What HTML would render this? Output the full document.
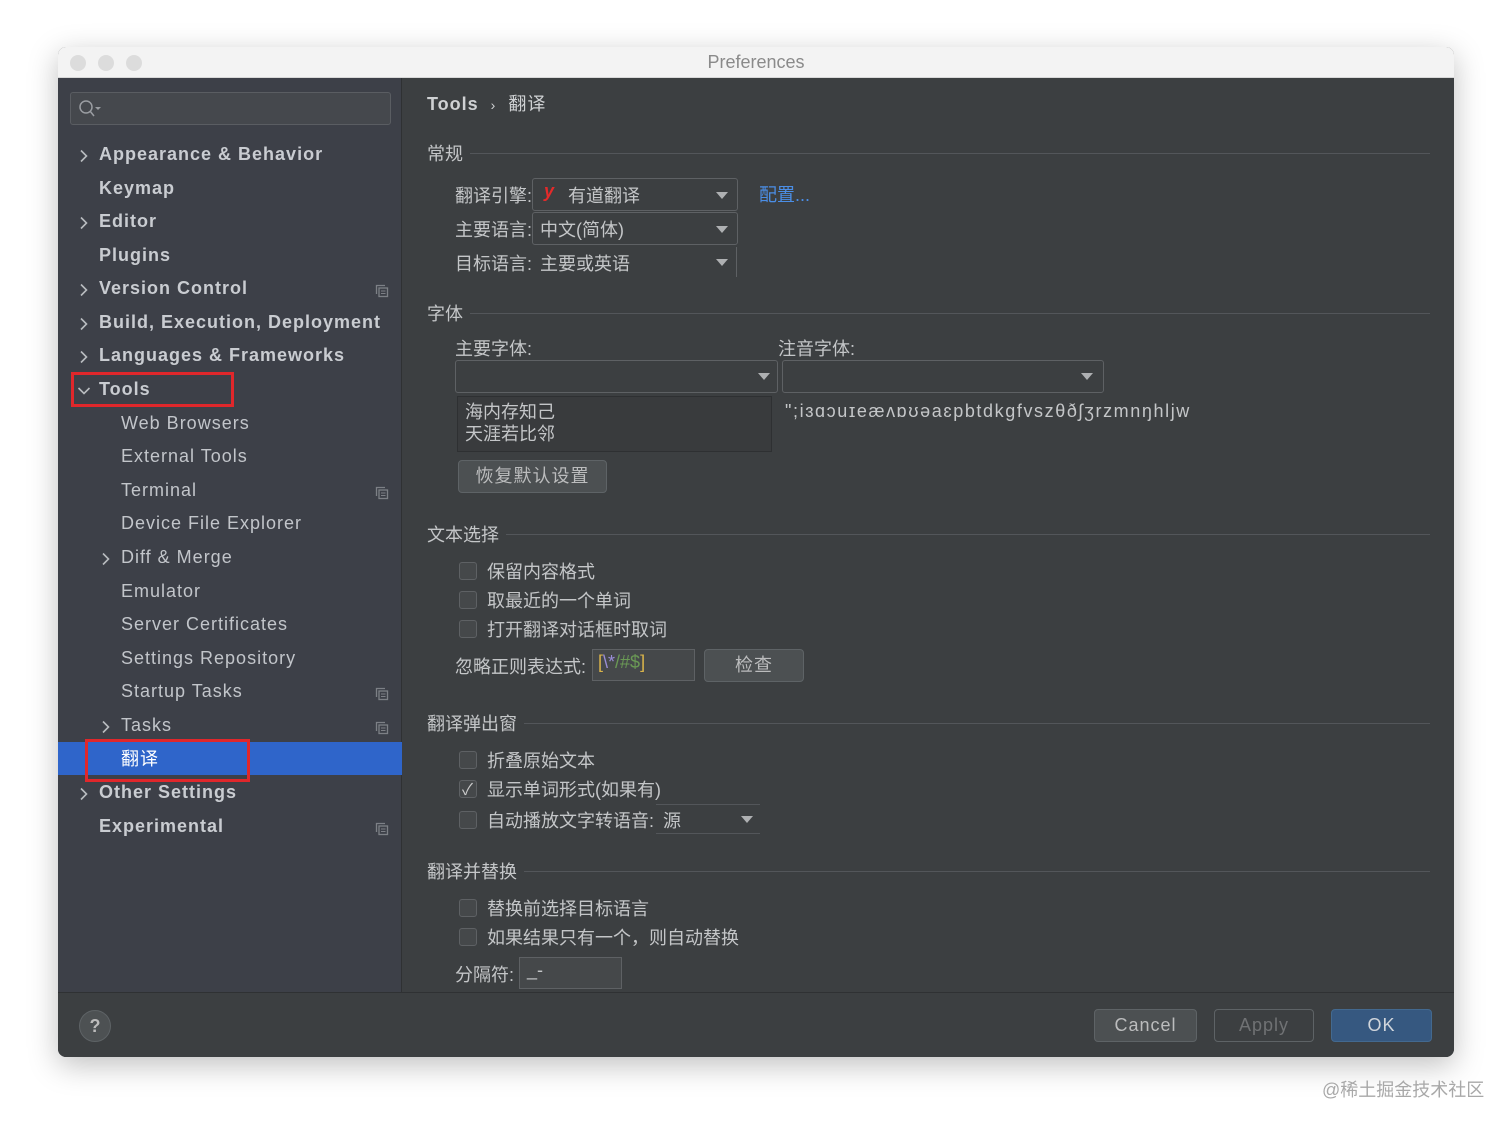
<!DOCTYPE html>
<html><head><meta charset="utf-8"><style>
*{margin:0;padding:0;box-sizing:border-box}
body{width:1512px;height:1127px;background:#fff;position:relative;overflow:hidden;font-family:"Liberation Sans","Noto Sans CJK SC",sans-serif;}
.a{position:absolute;white-space:nowrap}
#win{position:absolute;left:58px;top:47px;width:1396px;height:1010px;border-radius:8px;overflow:hidden;box-shadow:0 8px 30px rgba(0,0,0,.25);background:#3c3f41}
#title{position:absolute;left:0;top:0;width:1396px;height:31px;background:#f3f3f3;border-bottom:1px solid #d8d8d8;text-align:center;line-height:31px;color:#8a8a8a;font-size:18px}
.dot{position:absolute;top:8px;width:16px;height:16px;border-radius:50%;background:#dcdcdc}
#side{position:absolute;left:0;top:31px;width:344px;height:914px;background:#3d4048;border-right:1px solid #2f3133}
#side .in{position:absolute;left:0;top:3px;width:344px;height:900px}
.s{position:absolute;color:#c9ccd1;font-size:18px;font-weight:bold;letter-spacing:1px}
.s2{position:absolute;color:#c2c5ca;font-size:18px;letter-spacing:1px}
.chev{position:absolute;width:10px;height:14px}
.cp{position:absolute;width:14px;height:14px}
.t{position:absolute;color:#c4c6c8;font-size:18px;white-space:nowrap}
.h{position:absolute;color:#c4c6c8;font-size:18px}
.line{position:absolute;height:1px;background:#53565a}
.cb{position:absolute;width:18px;height:18px;border:1px solid #5e6164;border-radius:3px;background:#45484a}
.dd{position:absolute;border:1px solid #5e6164;border-radius:3px;background:#3c3f41}
.tri{position:absolute;width:0;height:0;border-left:6px solid transparent;border-right:6px solid transparent;border-top:7px solid #aeb0b2}
.btn{position:absolute;border:1px solid #5e6366;border-radius:4px;background:#4c5052;color:#bbbcbd;font-size:18px;text-align:center;letter-spacing:1px}
</style></head><body>
<svg width="0" height="0" style="position:absolute"><defs>
<symbol id="ch" viewBox="0 0 10 14"><path d="M2 1.5 L7.5 7 L2 12.5" stroke="#b8bbbf" stroke-width="1.6" fill="none"/></symbol>
<symbol id="cpi" viewBox="0 0 14 14"><path d="M1.5 10V1.5H10" stroke="#7d8086" stroke-width="1.3" fill="none"/><rect x="4" y="4" width="8.5" height="8.5" stroke="#7d8086" stroke-width="1.3" fill="none"/><path d="M6 7h4.5M6 9.5h4.5" stroke="#7d8086" stroke-width="1"/></symbol>
</defs></svg>
<div id="win">
<div id="title">Preferences</div>
<div class="dot" style="left:12px"></div><div class="dot" style="left:40px"></div><div class="dot" style="left:68px"></div>
<div id="side">
<div class="a" style="left:12px;top:14px;width:321px;height:33px;border:1px solid #5a5d62;border-radius:3px;background:#45484d"></div>
<svg class="a" style="left:20px;top:21px" width="26" height="20"><circle cx="8" cy="8" r="6" stroke="#9a9da2" stroke-width="1.5" fill="none"/><line x1="12" y1="12" x2="16" y2="17" stroke="#9a9da2" stroke-width="1.5"/><path d="M17 8h6l-3 3z" fill="#9a9da2"/></svg>
<div class="in">
<svg class="chev" style="left:21px;top:68px"><use href="#ch"/></svg><div class="s" style="left:41px;top:63px">Appearance &amp; Behavior</div>
<div class="s" style="left:41px;top:97px">Keymap</div>
<svg class="chev" style="left:21px;top:135px"><use href="#ch"/></svg><div class="s" style="left:41px;top:130px">Editor</div>
<div class="s" style="left:41px;top:164px">Plugins</div>
<svg class="chev" style="left:21px;top:202px"><use href="#ch"/></svg><div class="s" style="left:41px;top:197px">Version Control</div><svg class="cp" style="left:317px;top:203px"><use href="#cpi"/></svg>
<svg class="chev" style="left:21px;top:236px"><use href="#ch"/></svg><div class="s" style="left:41px;top:231px">Build, Execution, Deployment</div>
<svg class="chev" style="left:21px;top:269px"><use href="#ch"/></svg><div class="s" style="left:41px;top:264px">Languages &amp; Frameworks</div>
<svg class="chev" style="left:21px;top:303px;transform:rotate(90deg)"><use href="#ch"/></svg><div class="s" style="left:41px;top:298px">Tools</div>
<div class="a" style="left:13px;top:291px;width:163px;height:35px;border:3px solid #e0272b"></div>
<div class="s2" style="left:63px;top:332px">Web Browsers</div>
<div class="s2" style="left:63px;top:365px">External Tools</div>
<div class="s2" style="left:63px;top:399px">Terminal</div><svg class="cp" style="left:317px;top:405px"><use href="#cpi"/></svg>
<div class="s2" style="left:63px;top:432px">Device File Explorer</div>
<svg class="chev" style="left:43px;top:471px"><use href="#ch"/></svg><div class="s2" style="left:63px;top:466px">Diff &amp; Merge</div>
<div class="s2" style="left:63px;top:500px">Emulator</div>
<div class="s2" style="left:63px;top:533px">Server Certificates</div>
<div class="s2" style="left:63px;top:567px">Settings Repository</div>
<div class="s2" style="left:63px;top:600px">Startup Tasks</div><svg class="cp" style="left:317px;top:606px"><use href="#cpi"/></svg>
<svg class="chev" style="left:43px;top:639px"><use href="#ch"/></svg><div class="s2" style="left:63px;top:634px">Tasks</div><svg class="cp" style="left:317px;top:640px"><use href="#cpi"/></svg>
<div class="a" style="left:0;top:661px;width:344px;height:33px;background:#2f65ca"></div>
<div class="s2" style="left:63px;top:664px;color:#fff">翻译</div>
<div class="a" style="left:27px;top:658px;width:165px;height:43px;border:3px solid #e0272b"></div>
<svg class="chev" style="left:21px;top:706px"><use href="#ch"/></svg><div class="s" style="left:41px;top:701px">Other Settings</div>
<div class="s" style="left:41px;top:735px">Experimental</div><svg class="cp" style="left:317px;top:741px"><use href="#cpi"/></svg>
</div>
</div>
<!-- content -->
<div class="t" style="left:369px;top:43px;font-weight:bold;color:#cfd1d3;letter-spacing:1px">Tools &nbsp;<span style="font-weight:normal;font-size:14px">›</span>&nbsp; <span style="font-weight:normal">翻译</span></div>
<div class="h" style="left:369px;top:93px">常规</div><div class="line" style="left:412px;top:106px;width:960px"></div>
<div class="t" style="left:397px;top:135px">翻译引擎:</div>
<div class="dd" style="left:474px;top:131px;width:206px;height:33px"></div>
<div class="t" style="left:486px;top:134px;color:#e42a2a;font-weight:bold;font-style:italic">y</div>
<div class="t" style="left:510px;top:135px">有道翻译</div><div class="tri" style="left:658px;top:145px"></div>
<div class="t" style="left:701px;top:134px;color:#4b8ee6">配置...</div>
<div class="t" style="left:397px;top:169px">主要语言:</div>
<div class="dd" style="left:474px;top:165px;width:206px;height:33px"></div>
<div class="t" style="left:482px;top:169px">中文(简体)</div><div class="tri" style="left:658px;top:179px"></div>
<div class="t" style="left:397px;top:203px">目标语言:</div>
<div class="t" style="left:482px;top:203px">主要或英语</div><div class="tri" style="left:658px;top:212px"></div>
<div class="a" style="left:678px;top:200px;width:1px;height:30px;background:#5e6164"></div>
<div class="h" style="left:369px;top:253px">字体</div><div class="line" style="left:412px;top:266px;width:960px"></div>
<div class="t" style="left:397px;top:288px">主要字体:</div>
<div class="t" style="left:720px;top:288px">注音字体:</div>
<div class="dd" style="left:397px;top:313px;width:323px;height:33px"></div><div class="tri" style="left:700px;top:326px"></div>
<div class="dd" style="left:724px;top:313px;width:322px;height:33px"></div><div class="tri" style="left:1023px;top:326px"></div>
<div class="a" style="left:399px;top:349px;width:315px;height:56px;background:#393b3d;border:1px solid #2e3032"></div>
<div class="t" style="left:407px;top:354px;line-height:22px">海内存知己<br>天涯若比邻</div>
<div class="t" style="left:727px;top:354px;letter-spacing:1.6px">";iɜɑɔuɪeæʌɒʊəaɛpbtdkgfvszθðʃʒrzmnŋhljw</div>
<div class="btn" style="left:400px;top:413px;width:149px;height:33px;line-height:31px">恢复默认设置</div>
<div class="h" style="left:369px;top:474px">文本选择</div><div class="line" style="left:448px;top:487px;width:924px"></div>
<div class="cb" style="left:401px;top:515px"></div><div class="t" style="left:429px;top:511px">保留内容格式</div>
<div class="cb" style="left:401px;top:544px"></div><div class="t" style="left:429px;top:540px">取最近的一个单词</div>
<div class="cb" style="left:401px;top:573px"></div><div class="t" style="left:429px;top:569px">打开翻译对话框时取词</div>
<div class="t" style="left:397px;top:606px">忽略正则表达式:</div>
<div class="a" style="left:534px;top:602px;width:103px;height:32px;border:1px solid #5e6164;background:#45484a"></div>
<div class="t" style="left:540px;top:605px"><span style="color:#d8b34a">[</span><span style="color:#9a8ed8">\*</span><span style="color:#6a9955">/#$</span><span style="color:#d8b34a">]</span></div>
<div class="btn" style="left:646px;top:602px;width:100px;height:33px;line-height:31px">检查</div>
<div class="h" style="left:369px;top:663px">翻译弹出窗</div><div class="line" style="left:466px;top:676px;width:906px"></div>
<div class="cb" style="left:401px;top:704px"></div><div class="t" style="left:429px;top:700px">折叠原始文本</div>
<div class="cb" style="left:401px;top:733px"></div><div class="t" style="left:404px;top:729px;color:#ccc;font-size:16px">✓</div><div class="t" style="left:429px;top:729px">显示单词形式(如果有)</div>
<div class="cb" style="left:401px;top:764px"></div><div class="t" style="left:429px;top:760px">自动播放文字转语音:</div>
<div class="t" style="left:605px;top:760px">源</div><div class="tri" style="left:683px;top:769px"></div>
<div class="line" style="left:598px;top:757px;width:104px"></div><div class="line" style="left:598px;top:786px;width:104px"></div>
<div class="h" style="left:369px;top:811px">翻译并替换</div><div class="line" style="left:466px;top:824px;width:906px"></div>
<div class="cb" style="left:401px;top:852px"></div><div class="t" style="left:429px;top:848px">替换前选择目标语言</div>
<div class="cb" style="left:401px;top:881px"></div><div class="t" style="left:429px;top:877px">如果结果只有一个，则自动替换</div>
<div class="t" style="left:397px;top:914px">分隔符:</div>
<div class="a" style="left:461px;top:910px;width:103px;height:32px;border:1px solid #5e6164;background:#45484a"></div>
<div class="t" style="left:469px;top:913px">_-</div>
<!-- bottom -->
<div class="a" style="left:0;top:945px;width:1396px;height:65px;background:#3c3f41;border-top:1px solid #2f3133"></div>
<div class="a" style="left:21px;top:963px;width:32px;height:32px;border-radius:50%;background:#4d5153;border:1px solid #5e6366;color:#bbb;font-size:18px;text-align:center;line-height:30px;font-weight:bold">?</div>
<div class="btn" style="left:1036px;top:962px;width:103px;height:33px;line-height:31px">Cancel</div>
<div class="btn" style="left:1156px;top:962px;width:100px;height:33px;line-height:31px;background:#3c3f41;color:#707274">Apply</div>
<div class="btn" style="left:1273px;top:962px;width:101px;height:33px;line-height:31px;background:#365880;border-color:#43698f;color:#d0d5db">OK</div>
</div>
<div class="a" style="left:1322px;top:1076px;color:#a8a8a8;font-size:18px">@稀土掘金技术社区</div>
</body></html>
